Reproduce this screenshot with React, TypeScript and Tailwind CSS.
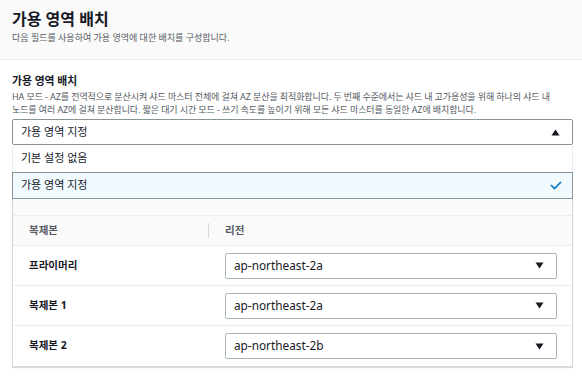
const font = { fontFamily: '"Noto Sans", "Noto Sans CJK KR", sans-serif' };

function Caret({ up }: { up?: boolean }) {
  return (
    <svg width="9" height="7" viewBox="0 0 9 7" className="shrink-0">
      {up ? <path d="M4.5 0.5 L8.5 6.5 L0.5 6.5 Z" fill="#16191f" /> : <path d="M0.5 0.5 L8.5 0.5 L4.5 6.5 Z" fill="#16191f" />}
    </svg>
  );
}

function RegionSelect({ value }: { value: string }) {
  return (
    <div className="flex items-center justify-between h-[26px] border border-[#aab7b8] rounded-[2px] bg-white pl-[8px] pr-[12px]">
      <span className="text-[11.8px] text-[#16191f]">{value}</span>
      <Caret />
    </div>
  );
}

const rows = [
  { name: "프라이머리", az: "ap-northeast-2a" },
  { name: "복제본 1", az: "ap-northeast-2a" },
  { name: "복제본 2", az: "ap-northeast-2b" },
];

export default function App() {
  return (
    <div className="w-[582px] h-[376px] bg-white overflow-hidden" style={font}>
      <div className="h-[60px] bg-[#fafafa] border-b border-[#eaeded] px-[12px] pt-[8px]">
        <h2 className="text-[16px] leading-[22px] font-bold text-[#16191f]">가용 영역 배치</h2>
        <p className="text-[9px] leading-[16px] text-[#545b64]">다음 필드를 사용하여 가용 영역에 대한 배치를 구성합니다.</p>
      </div>
      <div className="pl-[12px] pr-[9px] pt-[13px]">
        <div className="text-[10.8px] leading-[16px] font-bold text-[#16191f]">가용 영역 배치</div>
        <p className="mt-[1px] text-[9px] leading-[13px] text-[#545b64] whitespace-nowrap tracking-[-0.1px]">
          HA 모드 - AZ를 전역적으로 분산시켜 샤드 마스터 전체에 걸쳐 AZ 분산을 최적화합니다. 두 번째 수준에서는 샤드 내 고가용성을 위해 하나의 샤드 내
          <br />
          노드를 여러 AZ에 걸쳐 분산합니다. 짧은 대기 시간 모드 - 쓰기 속도를 높이기 위해 모든 샤드 마스터를 동일한 AZ에 배치합니다.
        </p>
        <div className="mt-[3px] flex items-center justify-between h-[26px] border border-[#879596] rounded-[2px] pl-[8px] pr-[12px]">
          <span className="text-[11px] text-[#16191f]">가용 영역 지정</span>
          <Caret up />
        </div>
        <div>
          <div className="h-[27px] flex items-center pl-[8px] text-[11px] text-[#16191f] border-x border-[#eaeded]">기본 설정 없음</div>
          <div className="h-[27px] flex items-center justify-between pl-[8px] pr-[10px] text-[11px] text-[#16191f] bg-[#f1faff] border border-[#879596]">
            <span>가용 영역 지정</span>
            <svg width="12" height="9" viewBox="0 0 12 9">
              <path d="M1 4 L4.5 7.5 L11 1" fill="none" stroke="#0073bb" strokeWidth="1.6" />
            </svg>
          </div>
        </div>
        <div className="border border-t-0 border-[#d5dbdb] shadow-[0_1px_1px_rgba(0,28,36,0.15)]">
          <div className="h-[16px] bg-[#fafafa]" />
          <div className="h-[31px] bg-[#fafafa] border-y border-[#eaeded] flex items-center text-[10.5px] font-bold text-[#545b64]">
            <div className="w-[196px] pl-[16px] border-r border-[#d5dbdb] h-[15px] flex items-center">복제본</div>
            <div className="pl-[16px]">리전</div>
          </div>
          {rows.map((r, i) => (
            <div key={r.name} className={`h-[40px] flex items-center ${i < rows.length - 1 ? "border-b border-[#eaeded]" : ""}`}>
              <div className="w-[212px] pl-[16px] text-[10.5px] font-bold text-[#16191f]">{r.name}</div>
              <div className="flex-1 pr-[15px]">
                <RegionSelect value={r.az} />
              </div>
            </div>
          ))}
        </div>
      </div>
    </div>
  );
}
